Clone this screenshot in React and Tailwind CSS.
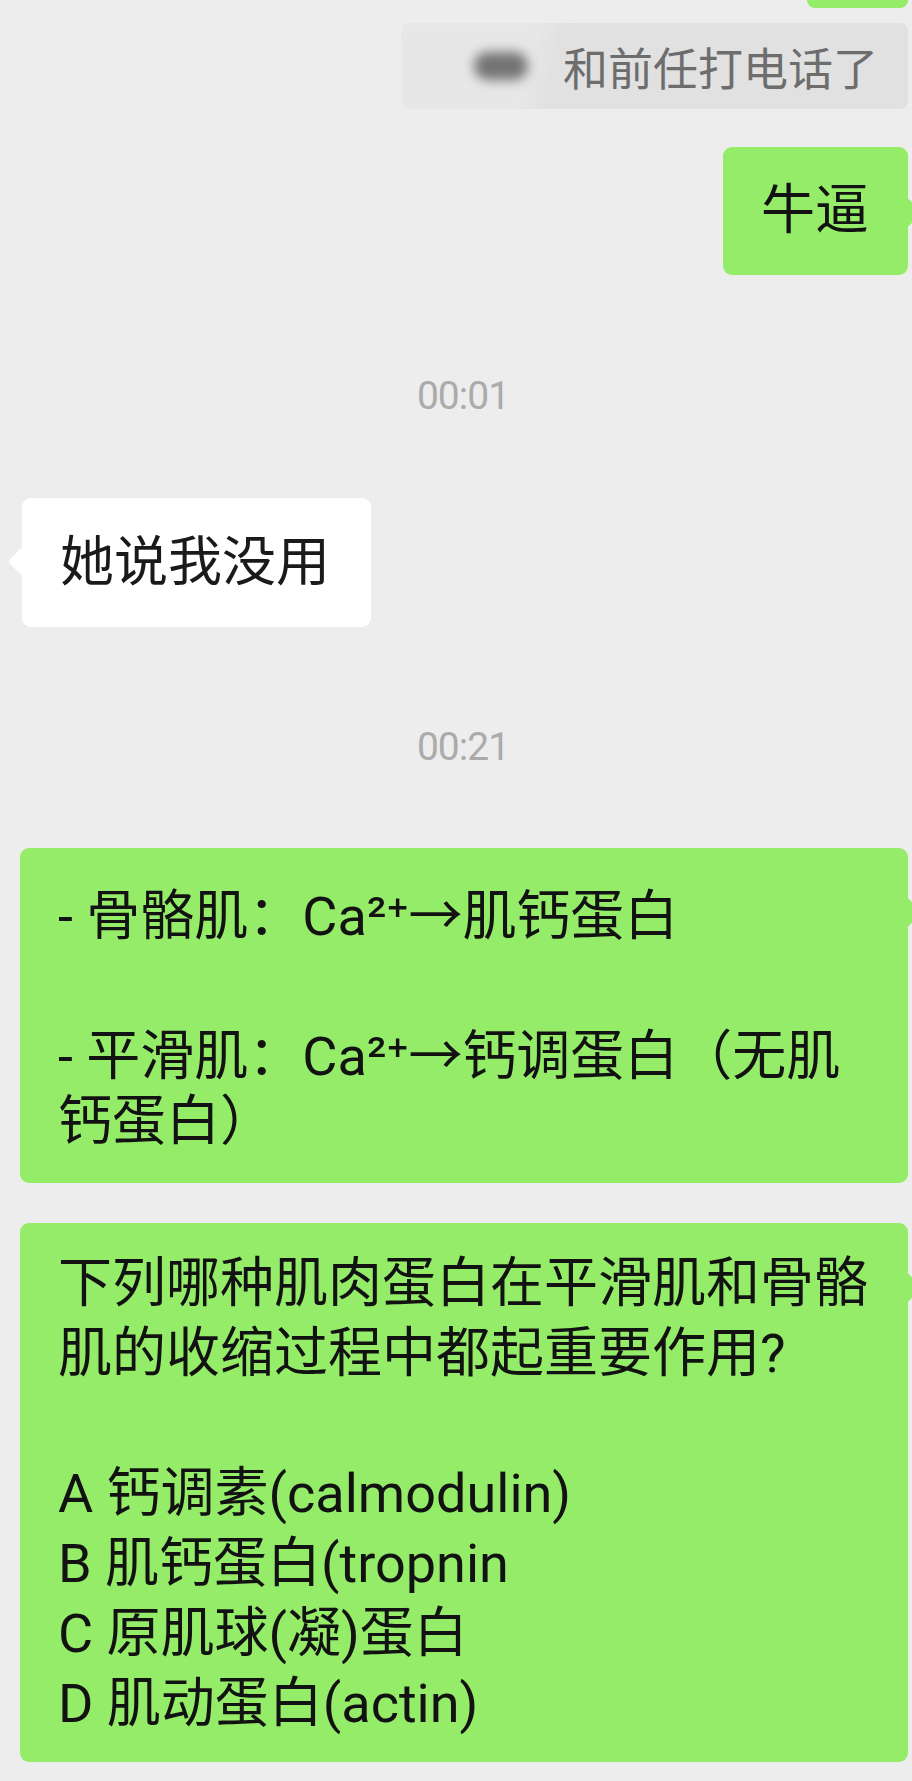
import React from "react";

function Line({ children }) {
  return <div className="h-[70px] leading-[70px] whitespace-nowrap">{children}</div>;
}

function Arrow() {
  return <span className="font-[family-name:'Noto_Sans_CJK_SC',sans-serif]">→</span>;
}

export default function App() {
  return (
    <div className="w-[912px] h-[1781px] overflow-hidden bg-[#ededed] flex flex-col font-[family-name:Roboto,'Noto_Sans_CJK_SC',sans-serif]">
      {/* previous green bubble fragment */}
      <div className="self-end mr-[4px] w-[101px] h-[8px] rounded-b-[8px] bg-[#95ec69]" />

      {/* quoted message */}
      <div className="self-end mr-[4px] mt-[15px] w-[506px] h-[86px] rounded-[8px] bg-[#e1e1e1] relative overflow-hidden flex items-center justify-end pr-[30px]">
        <div className="absolute left-[-20px] top-[-10px] bottom-[-10px] w-[160px] bg-[#e7e7e7] blur-[8px] -skew-x-12" />
        <div className="absolute left-[72px] top-[29px] w-[54px] h-[28px] rounded-full bg-[#737373] blur-[6px]" />
        <span className="relative text-[45px] leading-[45px] text-[#6d6d6d] font-[family-name:'Noto_Sans_CJK_SC',sans-serif]">
          和前任打电话了
        </span>
      </div>

      {/* 牛逼 */}
      <div className="self-end mr-[4px] mt-[38px] relative rounded-[9px] bg-[#95ec69] pl-[38px] pr-[39px] pt-[29px] pb-[29px] text-[54px] text-[#121212]">
        <div className="absolute -right-[10px] top-[55px] w-[21px] h-[21px] rotate-45 rounded-[3px] bg-[#95ec69]" />
        <div className="relative">
          <Line>牛逼</Line>
        </div>
      </div>

      {/* timestamp */}
      <div className="mt-[99px] pl-[14px] text-center text-[39px] leading-[44px] tracking-[-1px] text-[#ababab]">
        00:01
      </div>

      {/* 她说我没用 */}
      <div className="self-start ml-[22px] mt-[80px] relative rounded-[9px] bg-white pl-[38px] pr-[41px] pt-[30px] pb-[29px] text-[54px] text-[#1a1a1a]">
        <div className="absolute -left-[10px] top-[53px] w-[21px] h-[21px] rotate-45 rounded-[3px] bg-white" />
        <div className="relative">
          <Line>她说我没用</Line>
        </div>
      </div>

      {/* timestamp */}
      <div className="mt-[98px] pl-[14px] text-center text-[39px] leading-[44px] tracking-[-1px] text-[#ababab]">
        00:21
      </div>

      {/* green bubble 1 */}
      <div className="ml-[20px] mr-[4px] mt-[79px] relative rounded-[9px] bg-[#95ec69] pl-[38px] pr-[30px] pt-[29px] pb-[26px] text-[54px] text-[#121212]">
        <div className="absolute -right-[10px] top-[54px] w-[21px] h-[21px] rotate-45 rounded-[3px] bg-[#95ec69]" />
        <div className="relative">
          <Line>- 骨骼肌：Ca²⁺<Arrow />肌钙蛋白</Line>
          <Line>{"\u00a0"}</Line>
          <Line>- 平滑肌：Ca²⁺<Arrow />钙调蛋白（无肌</Line>
          <Line>钙蛋白）</Line>
        </div>
      </div>

      {/* green bubble 2 */}
      <div className="ml-[20px] mr-[4px] mt-[40px] relative rounded-[9px] bg-[#95ec69] pl-[38px] pr-[30px] pt-[26px] pb-[23px] text-[54px] text-[#121212]">
        <div className="absolute -right-[10px] top-[54px] w-[21px] h-[21px] rotate-45 rounded-[3px] bg-[#95ec69]" />
        <div className="relative">
          <Line>下列哪种肌肉蛋白在平滑肌和骨骼</Line>
          <Line>肌的收缩过程中都起重要作用?</Line>
          <Line>{"\u00a0"}</Line>
          <Line>A 钙调素(calmodulin)</Line>
          <Line>B 肌钙蛋白(tropnin</Line>
          <Line>C 原肌球(凝)蛋白</Line>
          <Line>D 肌动蛋白(actin)</Line>
        </div>
      </div>
    </div>
  );
}
